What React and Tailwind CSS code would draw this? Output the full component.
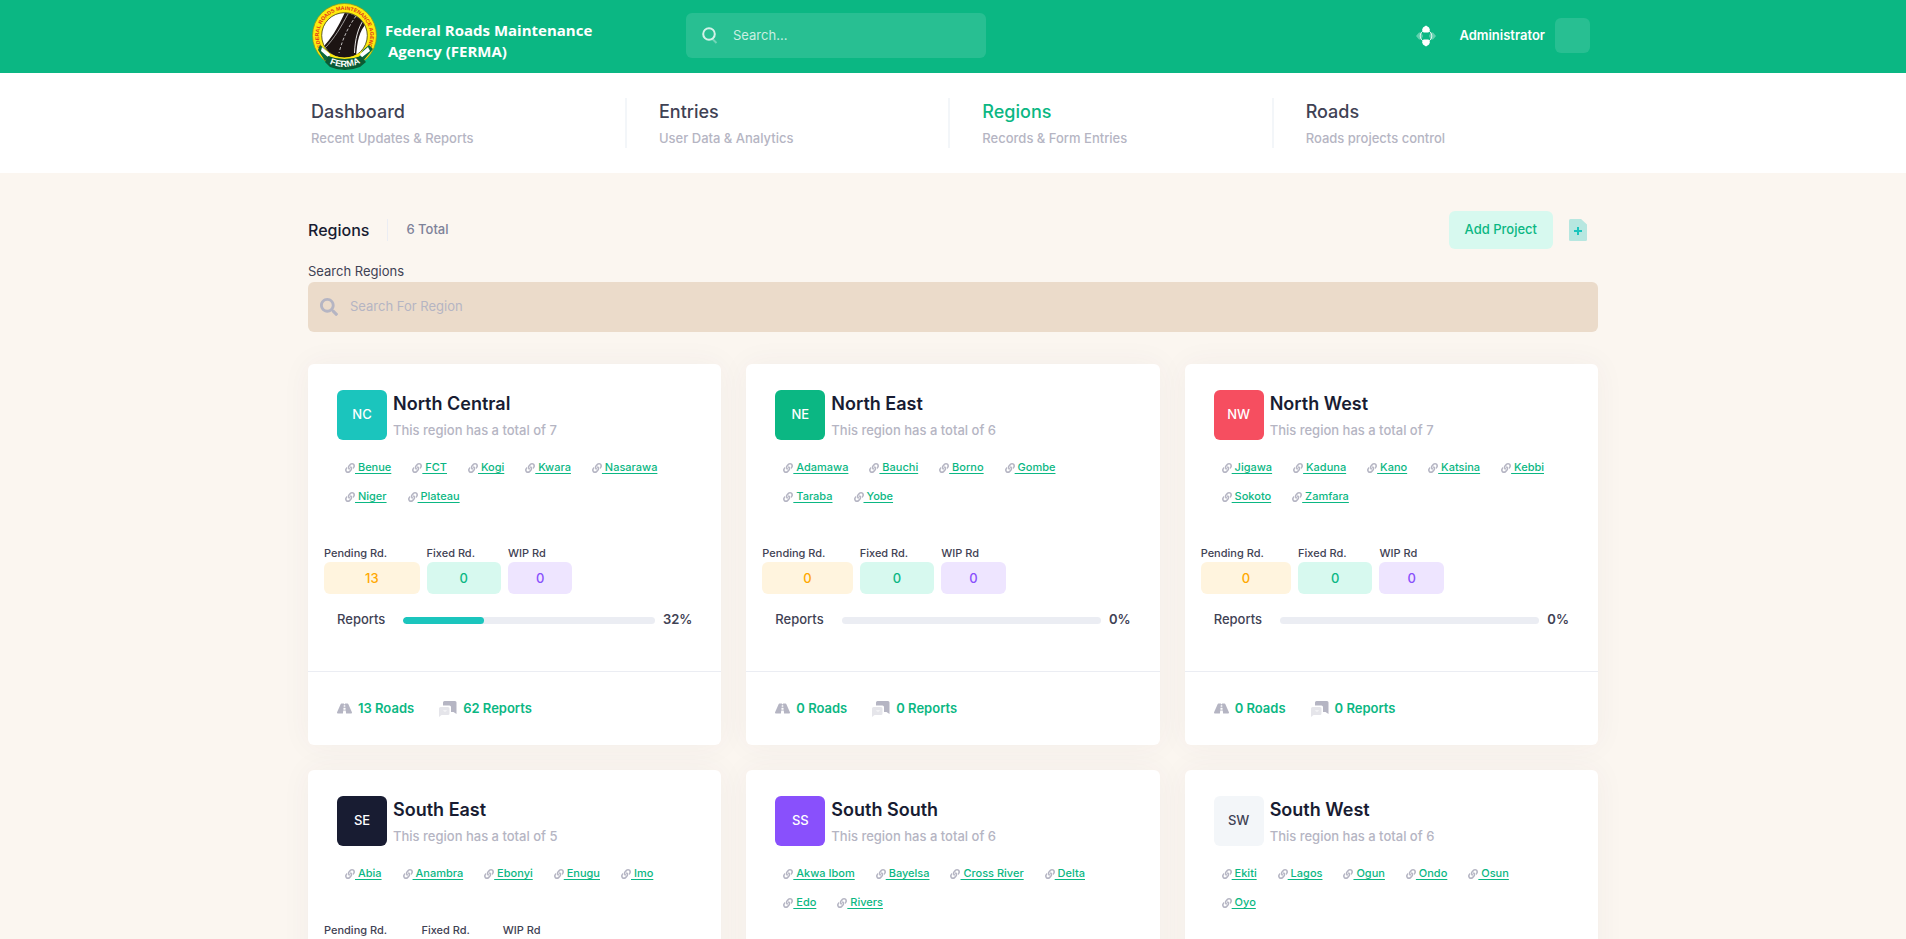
import React from 'react';
import { FaLink, FaRoad, FaSearch } from 'react-icons/fa';

const navItems = [
  { title: 'Dashboard', desc: 'Recent Updates & Reports' },
  { title: 'Entries', desc: 'User Data & Analytics' },
  { title: 'Regions', desc: 'Records & Form Entries', active: true },
  { title: 'Roads', desc: 'Roads projects control' },
];

const regions = [
  { code: 'NC', name: 'North Central', tile: 'bg-[#1bc5bd] text-white', states: ['Benue', 'FCT', 'Kogi', 'Kwara', 'Nasarawa', 'Niger', 'Plateau'], pending: 13, fixed: 0, wip: 0, percent: 32, roads: 13, reports: 62 },
  { code: 'NE', name: 'North East', tile: 'bg-[#0bb783] text-white', states: ['Adamawa', 'Bauchi', 'Borno', 'Gombe', 'Taraba', 'Yobe'], pending: 0, fixed: 0, wip: 0, percent: 0, roads: 0, reports: 0 },
  { code: 'NW', name: 'North West', tile: 'bg-[#f64e60] text-white', states: ['Jigawa', 'Kaduna', 'Kano', 'Katsina', 'Kebbi', 'Sokoto', 'Zamfara'], pending: 0, fixed: 0, wip: 0, percent: 0, roads: 0, reports: 0 },
  { code: 'SE', name: 'South East', tile: 'bg-[#181c32] text-white', states: ['Abia', 'Anambra', 'Ebonyi', 'Enugu', 'Imo'], pending: 0, fixed: 0, wip: 0, percent: 0, roads: 0, reports: 0 },
  { code: 'SS', name: 'South South', tile: 'bg-[#8950fc] text-white', states: ['Akwa Ibom', 'Bayelsa', 'Cross River', 'Delta', 'Edo', 'Rivers'], pending: 0, fixed: 0, wip: 0, percent: 0, roads: 0, reports: 0 },
  { code: 'SW', name: 'South West', tile: 'bg-[#f3f6f9] text-[#3f4254]', states: ['Ekiti', 'Lagos', 'Ogun', 'Ondo', 'Osun', 'Oyo'], pending: 0, fixed: 0, wip: 0, percent: 0, roads: 0, reports: 0 },
];

function Logo() {
  return (
    <svg viewBox="0 0 70 72" className="h-[72px] w-[70px] shrink-0" role="img" aria-label="FERMA seal">
      <defs>
        <path id="ring" d="M14.500 50.500A25.600 25.600 0 1 1 54.500 50.500" />
        <path id="ribbon" d="M19 62.500Q34.500 70 51 61.500" />
        <clipPath id="disc"><circle cx="34.500" cy="34.500" r="22.500" /></clipPath>
      </defs>
      <circle cx="34.500" cy="34.500" r="32" fill="#fdea0e" stroke="#8a9a1a" strokeWidth=".8" />
      <circle cx="34.500" cy="34.500" r="22.800" fill="#fff" stroke="#3a3a10" strokeWidth=".8" />
      <g clipPath="url(#disc)">
        <path d="M10 49C20 40 28 27 36 9L60 14L57 22C49 30 47 40 46 58H12Z" fill="#1c1413" />
        <path d="M15 47C24 38 31 26 38 13" fill="none" stroke="#ddd" strokeWidth=".7" />
        <path d="M54 18C48 27 45 38 44.500 52" fill="none" stroke="#fff" strokeWidth=".9" />
        <path d="M46 15C39 25 33 36 29 52" fill="none" stroke="#eee" strokeWidth=".8" strokeDasharray="3 2" />
      </g>
      <text fontSize="5.300" fontWeight="700" fill="#e0301e" fontFamily="Liberation Sans, sans-serif">
        <textPath href="#ring" startOffset="50%" textAnchor="middle">FEDERAL ROADS MAINTENANCE AGENCY</textPath>
      </text>
      <path d="M15 49Q34 64 54 49L54 55Q34 64 15 55Z" fill="#fdea0e" />
      <path d="M10 44L16 49L20 56L15 60L8 49ZM59 44L53 49L49 56L54 59L63 48Z" fill="#0b6b3c" />
      <path d="M12 46L20 53L19 57L11 50ZM58 46L50 53L51 57L60 50Z" fill="#fff" />
      <path d="M18 55Q34.500 61 51 55L56 61L50 66Q34.500 72 20 66L15 61Z" fill="#0b5a34" />
      <text fontSize="9" fontWeight="700" fill="#fff" fontFamily="Liberation Sans, sans-serif">
        <textPath href="#ribbon" startOffset="50%" textAnchor="middle">FERMA</textPath>
      </text>
    </svg>
  );
}

function ChatIcon() {
  return (
    <svg viewBox="0 0 18 16" className="h-4 w-[18px]" fill="#b5b5c3" aria-hidden="true">
      <path d="M5.500 0H16Q17.500 0 17.500 1.500V13L14.500 11H12V6Q12 4.500 10.500 4.500H4V1.500Q4 0 5.500 0Z" />
      <path opacity=".35" fillRule="evenodd" d="M1.500 6H9Q10.500 6 10.500 7.500V12.500Q10.500 14 9 14H2.500L0 16V7.500Q0 6 1.500 6ZM4 9.500Q6 11.500 8 9.500Z" />
    </svg>
  );
}

function Header() {
  return (
    <header className="bg-[#0bb783]">
      <div className="mx-auto flex h-[73px] max-w-[1340px] items-center px-[25px]">
        <div className="flex w-[378px] items-center gap-[5px] pl-0.5">
          <Logo />
          <p className="pt-2 font-['Open_Sans',sans-serif] text-[15px] leading-[21px] font-bold whitespace-nowrap text-white">
            Federal Roads Maintenance
            <span className="block pl-[3px]">Agency (FERMA)</span>
          </p>
        </div>
        <label className="mb-0.5 flex h-[45px] w-[300px] items-center gap-[15px] rounded-md bg-white/12 px-4">
          <svg viewBox="0 0 16 17" className="h-[17px] w-4 shrink-0" fill="none" stroke="#fff" strokeWidth="2" aria-hidden="true">
            <path d="M10.500 12L14.500 16" opacity=".35" />
            <circle cx="7" cy="7" r="5.800" opacity=".8" />
          </svg>
          <input aria-label="Search" type="text" placeholder="Search..." className="min-w-0 flex-1 bg-transparent text-[13px] text-white outline-none placeholder:text-white/75" />
        </label>
        <div className="mb-0.5 ml-auto flex items-center gap-[10px] pr-2">
          <button type="button" aria-label="Quick actions" className="mr-3">
            <svg viewBox="0 0 22 22" className="size-[22px]" aria-hidden="true">
              <circle cx="11" cy="11" r="5.800" fill="none" stroke="#fff" strokeWidth="1" opacity=".8" />
              <path d="M1 11L4 7.500H6.500L8 11L6.500 14.500H4ZM21 11L18 7.500H15.500L14 11L15.500 14.500H18Z" fill="#fff" opacity=".35" />
              <path d="M11 .500L14 2.500L15 5L13.500 7.500H8.500L7 5L8 2.500ZM11 21.500L14 19.500L15 17L13.500 14.500H8.500L7 17L8 19.500Z" fill="#fff" />
            </svg>
          </button>
          <a href="#profile" className="flex items-center gap-[10px] text-[13px] font-semibold text-white">
            Administrator
            <span className="size-[35px] rounded-md bg-white/12" />
          </a>
        </div>
      </div>
    </header>
  );
}

function Nav() {
  return (
    <nav className="bg-white">
      <ul className="mx-auto flex h-[100px] max-w-[1340px] items-center px-7">
        {navItems.map((item) => (
          <li key={item.title} className="h-[50px] flex-1 border-r-2 border-[#f3f6f9] pl-8 first:w-[316px] first:flex-none first:pl-0 last:border-0">
            <a href={'#' + item.title.toLowerCase()} className="block">
              <span className={item.active ? 'block text-lg leading-[27px] font-medium text-[#0bb783]' : 'block text-lg leading-[27px] font-medium text-[#3f4254]'}>{item.title}</span>
              <span className="block text-[13px] leading-[27px] font-medium text-[#b5b5c3]">{item.desc}</span>
            </a>
          </li>
        ))}
      </ul>
    </nav>
  );
}

function Badge({ label, value, className }) {
  return (
    <div className="flex flex-col">
      <span className="text-[11px] leading-[17px] font-medium text-[#3f4254]">{label}</span>
      <span className={'rounded-md text-center text-[13px] leading-8 font-medium ' + className}>{value}</span>
    </div>
  );
}

function RegionCard({ region }) {
  return (
    <article className="flex flex-col rounded-md bg-white shadow-[0_0_30px_rgba(82,63,105,0.05)]">
      <div className="flex-1 px-[29px] pt-[26px] pb-[37px]">
        <div className="flex items-start gap-1.5">
          <span className={'flex size-[50px] items-center justify-center rounded-md text-[13px] font-medium ' + region.tile}>{region.code}</span>
          <div>
            <h2 className="text-lg leading-[27px] font-semibold text-[#181c32]">{region.name}</h2>
            <p className="text-[13px] leading-[26px] font-medium text-[#b5b5c3]">This region has a total of {region.states.length}</p>
          </div>
        </div>
        <ul className="mt-[10px] flex flex-wrap">
          {region.states.map((state) => (
            <li key={state} className="flex h-[29px] items-center pr-[13px] pl-2 text-[11px] font-medium text-[#0bb783]">
              <FaLink className="size-[10px] text-[#b5b5c3]" aria-hidden="true" />
              <a href={'#' + state} className="whitespace-pre underline underline-offset-2">{' ' + state}</a>
            </li>
          ))}
        </ul>
        <div className="mt-[34px] -ml-[13px] flex gap-[7px]">
          <Badge label="Pending Rd." value={region.pending} className="bg-[#fff4de] px-[41px] text-[#ffa800]" />
          <Badge label="Fixed Rd." value={region.fixed} className="bg-[#d7f9ef] px-[33px] text-[#0bb783]" />
          <Badge label="WIP Rd" value={region.wip} className="bg-[#eee5ff] px-7 text-[#8950fc]" />
        </div>
        <div className="mt-3 flex h-7 items-center text-[13px] text-[#3f4254]">
          <span className="font-medium">Reports</span>
          <div className="mr-2 ml-[18px] h-[7px] flex-1 overflow-hidden rounded bg-[#ebedf3]">
            <div className="h-full rounded bg-[#1bc5bd]" style={{ width: region.percent + '%' }} />
          </div>
          <span className="font-semibold">{region.percent}%</span>
        </div>
      </div>
      <div className="flex h-[74px] items-center border-t border-[#ebedf3] px-[29px] text-[13px] font-semibold text-[#0bb783]">
        <a href="#roads" className="mr-[25px] flex items-center gap-1.5">
          <FaRoad className="size-[15px] text-[#b5b5c3]" aria-hidden="true" />
          {region.roads} Roads
        </a>
        <a href="#reports" className="flex items-center gap-1.5">
          <ChatIcon />
          {region.reports} Reports
        </a>
      </div>
    </article>
  );
}

export default function App() {
  return (
    <div className="min-h-screen bg-[#fbf6f0] font-['Inter',sans-serif] text-[#3f4254]">
      <Header />
      <Nav />
      <main className="mx-auto max-w-[1340px] px-[25px] pt-[38px] pb-10">
        <div className="flex h-[38px] items-center">
          <h1 className="text-base font-medium text-[#181c32]">Regions</h1>
          <span className="mx-[18px] h-[22px] w-px bg-[#ebedf3]" />
          <span className="text-[13px] font-medium text-[#7e8299]">6 Total</span>
          <button type="button" className="ml-auto h-[38px] rounded-md bg-[#d7f9ef] px-4 text-[13px] font-medium text-[#0bb783]">Add Project</button>
          <button type="button" aria-label="Add file" className="mr-[11px] ml-4">
            <svg viewBox="0 0 18 22" className="h-[22px] w-[18px]" aria-hidden="true">
              <path d="M1.500 0H12L18 5.500V20.500Q18 22 16.500 22H1.500Q0 22 0 20.500V1.500Q0 0 1.500 0Z" fill="#1bc5bd" opacity=".3" />
              <path d="M8 8H10V11H13V13H10V16H8V13H5V11H8Z" fill="#1bc5bd" />
            </svg>
          </button>
        </div>
        <label htmlFor="region-search" className="mt-3 block text-[13px] leading-[21px]">Search Regions</label>
        <div className="flex h-[50px] items-center gap-3 rounded-md bg-[#ebdbca] px-3">
          <FaSearch className="size-[18px] shrink-0 text-[#b5b5c3]" aria-hidden="true" />
          <input id="region-search" type="text" placeholder="Search For Region" className="min-w-0 flex-1 bg-transparent text-[13px] outline-none placeholder:text-[#b5b5c3]" />
        </div>
        <div className="mt-8 grid grid-cols-1 gap-[25px] md:grid-cols-2 xl:grid-cols-3">
          {regions.map((region) => (
            <RegionCard key={region.code} region={region} />
          ))}
        </div>
      </main>
    </div>
  );
}
